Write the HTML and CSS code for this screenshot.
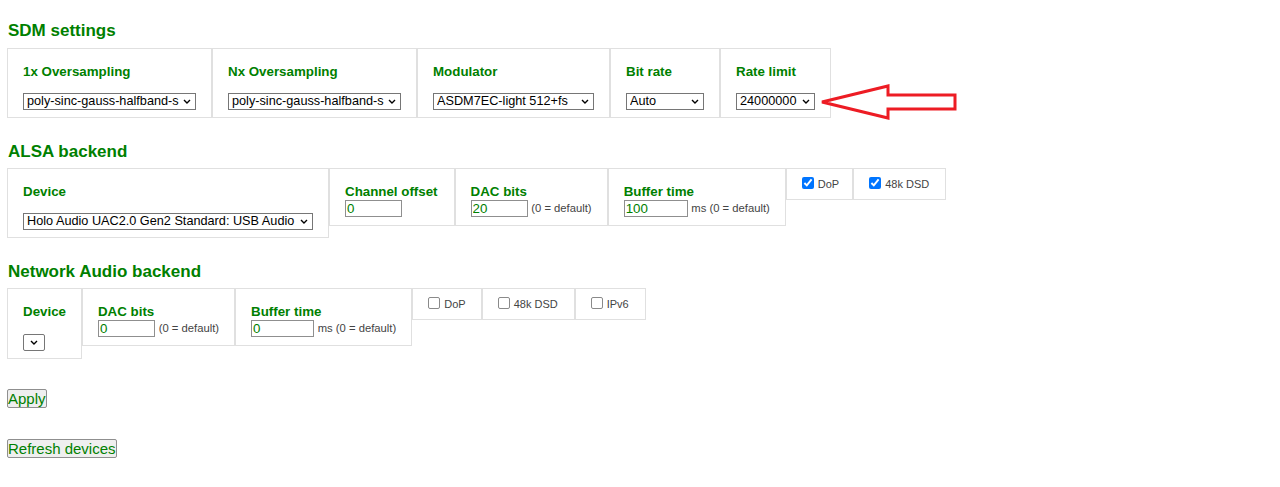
FILE: index.html
```html
<!DOCTYPE html>
<html>
<head>
<meta charset="utf-8">
<link rel="stylesheet" href="styles.css">
</head>
<body>
<h3 class="first">SDM settings</h3>
<div class="row">
  <div class="box">
    <label class="lbl">1x Oversampling</label>
    <span class="selwrap"><select class="sel sel-w173"><option>poly-sinc-gauss-halfband-s</option></select><svg class="chev" width="8" height="5" viewBox="0 0 8 5"><path d="M1 1 L4 4 L7 1" fill="none" stroke="#000" stroke-width="1.4"/></svg></span>
  </div>
  <div class="box">
    <label class="lbl">Nx Oversampling</label>
    <span class="selwrap"><select class="sel sel-w173"><option>poly-sinc-gauss-halfband-s</option></select><svg class="chev" width="8" height="5" viewBox="0 0 8 5"><path d="M1 1 L4 4 L7 1" fill="none" stroke="#000" stroke-width="1.4"/></svg></span>
  </div>
  <div class="box">
    <label class="lbl">Modulator</label>
    <span class="selwrap"><select class="sel sel-w161"><option>ASDM7EC-light 512+fs</option></select><svg class="chev" width="8" height="5" viewBox="0 0 8 5"><path d="M1 1 L4 4 L7 1" fill="none" stroke="#000" stroke-width="1.4"/></svg></span>
  </div>
  <div class="box">
    <label class="lbl">Bit rate</label>
    <span class="selwrap"><select class="sel sel-w78"><option>Auto</option></select><svg class="chev" width="8" height="5" viewBox="0 0 8 5"><path d="M1 1 L4 4 L7 1" fill="none" stroke="#000" stroke-width="1.4"/></svg></span>
  </div>
  <div class="box">
    <label class="lbl">Rate limit</label>
    <span class="selwrap"><select class="sel sel-w79"><option>24000000</option></select><svg class="chev" width="8" height="5" viewBox="0 0 8 5"><path d="M1 1 L4 4 L7 1" fill="none" stroke="#000" stroke-width="1.4"/></svg></span>
  </div>
</div>

<h3>ALSA backend</h3>
<div class="row">
  <div class="box">
    <label class="lbl">Device</label>
    <span class="selwrap"><select class="sel sel-w290"><option>Holo Audio UAC2.0 Gen2 Standard: USB Audio</option></select><svg class="chev" width="8" height="5" viewBox="0 0 8 5"><path d="M1 1 L4 4 L7 1" fill="none" stroke="#000" stroke-width="1.4"/></svg></span>
  </div>
  <div class="box box-in box-wide">
    <label class="lbl">Channel offset</label>
    <input class="txt txt-w57" type="text" value="0">
  </div>
  <div class="box box-in">
    <label class="lbl">DAC bits</label>
    <input class="txt txt-w57" type="text" value="20"> <span class="note">(0 = default)</span>
  </div>
  <div class="box box-in">
    <label class="lbl">Buffer time</label>
    <input class="txt txt-w64" type="text" value="100"> <span class="note">ms (0 = default)</span>
  </div>
  <div class="box box-cb box-dop">
    <label class="cb"><input type="checkbox" checked><span>DoP</span></label>
  </div>
  <div class="box box-cb box-dsd">
    <label class="cb"><input type="checkbox" checked><span>48k DSD</span></label>
  </div>
</div>

<h3>Network Audio backend</h3>
<div class="row">
  <div class="box">
    <label class="lbl">Device</label>
    <span class="selwrap sel-net"><select class="sel sel-w22"></select><svg class="chev" width="8" height="5" viewBox="0 0 8 5"><path d="M1 1 L4 4 L7 1" fill="none" stroke="#000" stroke-width="1.4"/></svg></span>
  </div>
  <div class="box box-in">
    <label class="lbl">DAC bits</label>
    <input class="txt txt-w57" type="text" value="0"> <span class="note">(0 = default)</span>
  </div>
  <div class="box box-in">
    <label class="lbl">Buffer time</label>
    <input class="txt txt-w63" type="text" value="0"> <span class="note">ms (0 = default)</span>
  </div>
  <div class="box box-cb">
    <label class="cb"><span class="ucb"></span><span>DoP</span></label>
  </div>
  <div class="box box-cb box-dsd">
    <label class="cb"><span class="ucb"></span><span>48k DSD</span></label>
  </div>
  <div class="box box-cb box-ipv6">
    <label class="cb"><span class="ucb"></span><span>IPv6</span></label>
  </div>
</div>

<div class="actions">
  <button class="btn">Apply</button>
  <button class="btn">Refresh devices</button>
</div>

<svg class="arrow" width="142" height="40" viewBox="0 0 142 40">
  <polygon points="4,20 70,4 70,13 137,13 137,27 70,27 70,36" fill="none" stroke="#ed1c24" stroke-width="3" stroke-linejoin="miter"/>
</svg>
</body>
</html>
```

FILE: styles.css
```css
html, body {
  margin: 0;
  padding: 0;
  background: #ffffff;
}
body {
  position: relative;
  padding: 0 7px;
  font-family: "Liberation Sans", Arial, sans-serif;
  font-size: 13.33px;
  color: #008000;
  width: 1266px;
  height: 487px;
  overflow: hidden;
}
h3 {
  font-size: 17px;
  line-height: 20px;
  font-weight: bold;
  color: #008000;
  margin: 24px 0 6px 1px;
}
h3.first {
  margin-top: 21px;
  margin-bottom: 7px;
}
.row {
  display: flex;
  align-items: flex-start;
}
.box {
  border: 1px solid #e0e0e0;
  padding: 15px 15px 7px;
}
.box-in {
  padding-bottom: 8px;
}
.box-wide {
  padding-right: 16px;
}
.box-cb {
  padding: 8px 15px;
}
.box-dop {
  padding-right: 13px;
}
.box-dsd {
  padding-right: 16px;
}
.box-ipv6 {
  padding-right: 16px;
}
.lbl {
  display: block;
  font-weight: bold;
  font-size: 13.33px;
  line-height: 15px;
  color: #008000;
}
.selwrap {
  position: relative;
  display: block;
  width: fit-content;
  margin-top: 14px;
}
.sel-net {
  margin-top: 15px;
}
.sel {
  display: block;
  -webkit-appearance: none;
  appearance: none;
  margin: 0;
  height: 17px;
  font-family: "Liberation Sans", Arial, sans-serif;
  font-size: 12.7px;
  line-height: 15px;
  color: #000;
  padding: 0 14px 0 3px;
  border: 1px solid #767676;
  border-radius: 0;
  background-color: #fff;
  box-sizing: border-box;
  overflow: hidden;
  white-space: nowrap;
}
.chev {
  position: absolute;
  right: 5px;
  top: 6px;
  pointer-events: none;
}
.sel-w173 { width: 173px; }
.sel-w161 { width: 161px; }
.sel-w78 { width: 78px; }
.sel-w79 { width: 79px; }
.sel-w290 { width: 290px; }
.sel-w22 { width: 22px; border-radius: 2px; padding: 0; }
.sel-net .chev { right: 7px; }
.txt {
  margin: 1px 0 0;
  height: 17px;
  box-sizing: border-box;
  padding: 0 1px;
  border: 1px solid #8f8f8f;
  font-family: "Liberation Sans", Arial, sans-serif;
  font-size: 13.33px;
  color: #008000;
  vertical-align: middle;
}
.txt-w57 { width: 57px; }
.txt-w64 { width: 64px; }
.txt-w63 { width: 63px; }
.note {
  font-size: 11.25px;
  color: #444;
  vertical-align: middle;
}
.cb {
  display: flex;
  align-items: center;
  height: 14px;
  font-size: 11px;
  color: #444;
}
.cb input {
  width: 12px;
  height: 12px;
  margin: -2px 4px 0 0;
}
.ucb {
  display: inline-block;
  width: 10px;
  height: 10px;
  border: 1px solid #8a8a8a;
  border-radius: 2px;
  margin: -2px 4px 0 0;
  background: #fff;
}
.actions {
  display: flex;
  flex-direction: column;
  align-items: flex-start;
  margin-top: 30px;
  gap: 31px;
}
.btn {
  font-family: "Liberation Sans", Arial, sans-serif;
  font-size: 15px;
  line-height: 17px;
  color: #008000;
  background: #efefef;
  border: 1px solid #8f8f8f;
  border-radius: 2px;
  padding: 0;
  height: 19px;
}
.arrow {
  position: absolute;
  left: 818px;
  top: 82px;
}
```
